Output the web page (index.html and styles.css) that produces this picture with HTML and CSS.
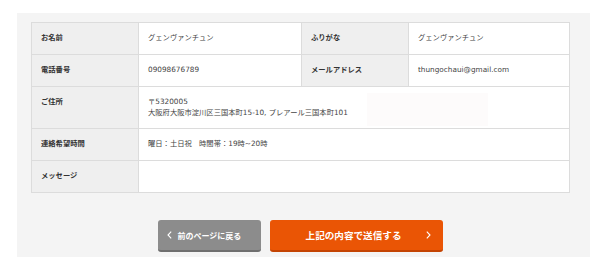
FILE: index.html
```html
<!DOCTYPE html>
<html lang="ja">
<head>
    <meta charset="UTF-8">
    <meta name="viewport" content="width=device-width, initial-scale=1.0">
    <title>お問い合わせ内容の確認</title>
    <link rel="stylesheet" href="styles.css">
</head>
<body>
    <div class="panel">
        <table class="confirm-table">
            <colgroup>
                <col class="col-label">
                <col class="col-value">
                <col class="col-label">
                <col class="col-value2">
            </colgroup>
            <tr>
                <th>お名前</th>
                <td>グェンヴァンチュン</td>
                <th>ふりがな</th>
                <td>グェンヴァンチュン</td>
            </tr>
            <tr>
                <th>電話番号</th>
                <td>09098676789</td>
                <th>メールアドレス</th>
                <td>thungochaui@gmail.com</td>
            </tr>
            <tr class="address-row">
                <th>ご住所</th>
                <td colspan="3">
                    〒5320005<br>
                    大阪府大阪市淀川区三国本町15-10, プレアール三国本町101
                    <span class="mask"></span>
                </td>
            </tr>
            <tr>
                <th>連絡希望時間</th>
                <td colspan="3">曜日：土日祝　時間帯：19時~20時</td>
            </tr>
            <tr>
                <th>メッセージ</th>
                <td colspan="3"></td>
            </tr>
        </table>

        <div class="actions">
            <button type="button" class="btn btn-back">
                <svg class="chev" width="5" height="8" viewBox="0 0 5 8"><polyline points="4.2,0.6 1,4 4.2,7.4" fill="none" stroke="#fff" stroke-width="1.1"/></svg>
                前のページに戻る
            </button>
            <button type="submit" class="btn btn-send">
                上記の内容で送信する
                <svg class="chev" width="5" height="8" viewBox="0 0 5 8"><polyline points="0.8,0.6 4,4 0.8,7.4" fill="none" stroke="#fff" stroke-width="1.1"/></svg>
            </button>
        </div>
    </div>
</body>
</html>
```

FILE: styles.css
```css
body {
    margin: 0;
    padding: 13px 10px 0 17px;
    background: #fff;
    font-family: "DejaVu Sans", "Noto Sans CJK JP", sans-serif;
    font-size: 7.3px;
    color: #444;
}
.panel {
    width: 573px;
    height: 244px;
    background: #f4f4f4;
    padding: 9px 0 0 14px;
    box-sizing: border-box;
}
.confirm-table {
    width: 538px;
    border-collapse: collapse;
    table-layout: fixed;
    background: #fff;
}
.col-label {
    width: 107px;
}
.col-value {
    width: 163px;
}
.col-value2 {
    width: 161px;
}
.confirm-table th,
.confirm-table td {
    border: 1px solid #dcdcdc;
    padding: 10px 8px 10px 9px;
    line-height: 10.5px;
    height: 11px;
    vertical-align: top;
    text-align: left;
}
.confirm-table th {
    background: #efefef;
    font-weight: bold;
    color: #333;
}
.address-row td {
    position: relative;
}
.mask {
    position: absolute;
    left: 228px;
    top: 6px;
    width: 121px;
    height: 33px;
    background: #fdfbfb;
}
.actions {
    width: 538px;
    display: flex;
    justify-content: center;
    gap: 9px;
    margin-top: 27px;
}
.btn {
    height: 32px;
    border: none;
    border-radius: 3px;
    color: #fff;
    font-family: inherit;
    font-weight: bold;
    display: flex;
    align-items: center;
    padding: 0;
    cursor: pointer;
}
.btn-back {
    width: 103px;
    background: #8c8c8c;
    border-bottom: 2px solid #6f6f6f;
    font-size: 8px;
    padding-left: 9px;
}
.btn-back .chev {
    margin-right: 6px;
}
.btn-send {
    width: 173px;
    background: #ea5505;
    border-bottom: 2px solid #c44403;
    font-size: 9.6px;
    justify-content: flex-end;
    padding-right: 12px;
}
.btn-send .chev {
    margin-left: 24px;
}
```
